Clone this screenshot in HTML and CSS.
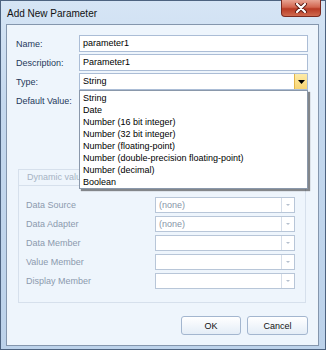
FILE: index.html
```html
<!DOCTYPE html>
<html lang="en">
<head>
    <meta charset="UTF-8">
    <title>Add New Parameter</title>
    <link rel="stylesheet" href="styles.css">
</head>
<body>
    <div class="window">
        <div class="titlebar">
            <span class="title">Add New Parameter</span>
            <div class="close-btn">
                <svg width="14" height="10" viewBox="0 0 14 10">
                    <path d="M3 1 L11 9 M11 1 L3 9" stroke="#5a1a12" stroke-width="4" stroke-linecap="round"/>
                    <path d="M3 1 L11 9 M11 1 L3 9" stroke="#fff" stroke-width="2.2" stroke-linecap="round"/>
                </svg>
            </div>
        </div>
        <div class="client">
            <div class="row">
                <label>Name:</label>
                <div class="field">parameter1</div>
            </div>
            <div class="row">
                <label>Description:</label>
                <div class="field">Parameter1</div>
            </div>
            <div class="row type-row">
                <label>Type:</label>
                <div class="field combo">
                    <span>String</span>
                    <span class="arrow-hot"><svg width="7" height="4" viewBox="0 0 7 4"><path d="M0 0 H7 L3.5 4 Z" fill="#000"/></svg></span>
                    <ul class="popup">
                        <li>String</li>
                        <li>Date</li>
                        <li>Number (16 bit integer)</li>
                        <li>Number (32 bit integer)</li>
                        <li>Number (floating-point)</li>
                        <li>Number (double-precision floating-point)</li>
                        <li>Number (decimal)</li>
                        <li>Boolean</li>
                    </ul>
                </div>
            </div>
            <div class="row">
                <label>Default Value:</label>
                <div class="field"></div>
            </div>

            <div class="group">
                <div class="group-caption">Dynamic values</div>
                <div class="group-rows">
                    <div class="grow">
                        <span>Data Source</span>
                        <div class="dcombo"><span class="val">(none)</span><span class="darrow"></span></div>
                    </div>
                    <div class="grow">
                        <span>Data Adapter</span>
                        <div class="dcombo"><span class="val">(none)</span><span class="darrow"></span></div>
                    </div>
                    <div class="grow">
                        <span>Data Member</span>
                        <div class="dcombo"><span class="val"></span><span class="darrow"></span></div>
                    </div>
                    <div class="grow">
                        <span>Value Member</span>
                        <div class="dcombo"><span class="val"></span><span class="darrow"></span></div>
                    </div>
                    <div class="grow">
                        <span>Display Member</span>
                        <div class="dcombo"><span class="val"></span><span class="darrow"></span></div>
                    </div>
                </div>
            </div>

            <div class="buttons">
                <div class="btn ok">OK</div>
                <div class="btn cancel">Cancel</div>
            </div>
        </div>
    </div>
</body>
</html>
```

FILE: styles.css
```css
body {
    margin: 0;
    padding: 0;
    font-family: "Liberation Sans", Arial, sans-serif;
    font-size: 9px;
    background-color: #fff;
}

.window {
    width: 326px;
    height: 350px;
    box-sizing: border-box;
    border: 1px solid #4d6380;
    background: linear-gradient(to bottom, #d6e5f5 0%, #c4d8ee 30%, #bcd2ea 100%);
    padding: 0 6px 3px 5px;
}

.titlebar {
    height: 23px;
    display: flex;
    align-items: flex-start;
    justify-content: space-between;
}

.title {
    margin-top: 7px;
    margin-left: 1px;
    font-size: 10px;
    color: #111;
}

.close-btn {
    width: 40px;
    height: 17px;
    margin-top: -1px;
    margin-right: -2px;
    box-sizing: border-box;
    border: 1px solid #7b2a20;
    border-top: none;
    border-radius: 0 0 4px 4px;
    background: linear-gradient(to bottom, #e8a493 0%, #d2654f 45%, #b83a24 55%, #cf6a4f 100%);
    display: flex;
    align-items: center;
    justify-content: center;
}

.client {
    height: 322px;
    box-sizing: border-box;
    border: 1px solid #8496ad;
    background-color: #eef5fc;
    padding: 10px 10px 0 9px;
    color: #1e395b;
}

.row {
    display: flex;
    align-items: center;
    height: 17px;
    margin-bottom: 2px;
}

.row label {
    width: 63px;
    flex-shrink: 0;
}

.field {
    flex: 1;
    height: 17px;
    box-sizing: border-box;
    background-color: #fff;
    border: 1px solid #abbdd6;
    color: #000;
    padding: 0 3px;
    line-height: 15px;
}

.combo {
    position: relative;
    display: flex;
    justify-content: space-between;
    padding-right: 0;
}

.arrow-hot {
    width: 13px;
    height: 15px;
    box-sizing: border-box;
    border-left: 1px solid #e3b54a;
    background: linear-gradient(to bottom, #fdeba8, #f8d573);
    display: flex;
    align-items: center;
    justify-content: center;
}

.popup {
    position: absolute;
    top: 16px;
    left: -1px;
    width: 229px;
    margin: 0;
    padding: 1px 0 0 0;
    list-style: none;
    box-sizing: border-box;
    background-color: #fff;
    border: 1px solid #8a98ab;
    box-shadow: 2px 2px 1px rgba(0, 0, 0, 0.45);
    z-index: 5;
}

.popup li {
    height: 12px;
    line-height: 12px;
    padding-left: 3px;
    color: #000;
}

.group {
    margin: 60px 2px 0 2px;
    height: 134px;
    box-sizing: border-box;
    border: 1px solid #d6e0ec;
    padding: 0 10px 0 7px;
}

/* caption is cut off where the open dropdown covers it */
.group-caption {
    color: #a6b3c4;
    height: 15px;
    line-height: 15px;
    margin-left: -7px;
    width: 52px;
    padding-left: 8px;
    border-bottom: 1px solid #d6e0ec;
    overflow: hidden;
    white-space: nowrap;
}

.group-rows {
    margin-top: 11px;
    display: flex;
    flex-direction: column;
    gap: 3px;
}

.grow {
    display: flex;
    align-items: center;
    justify-content: space-between;
    height: 16px;
    color: #8c9aae;
}

.dcombo {
    width: 140px;
    height: 16px;
    box-sizing: border-box;
    border: 1px solid #b8c6d8;
    background-color: #fff;
    display: flex;
    justify-content: space-between;
}

.dcombo .val {
    padding-left: 3px;
    line-height: 14px;
    color: #8795a8;
}

.darrow {
    width: 12px;
    border-left: 1px solid #d5dde8;
    position: relative;
}

.darrow::after {
    content: "";
    position: absolute;
    left: 4px;
    top: 6px;
    border-left: 2px solid transparent;
    border-right: 2px solid transparent;
    border-top: 2px solid #b5c0ce;
}

.buttons {
    display: flex;
    justify-content: flex-end;
    gap: 6px;
    margin-top: 13px;
}

.btn {
    height: 19px;
    box-sizing: border-box;
    border: 1px solid #a3b6cf;
    border-radius: 3px;
    background: linear-gradient(to bottom, #ffffff, #e4edf7);
    color: #111;
    display: flex;
    align-items: center;
    justify-content: center;
}

.ok {
    width: 60px;
}

.cancel {
    width: 61px;
}
```
